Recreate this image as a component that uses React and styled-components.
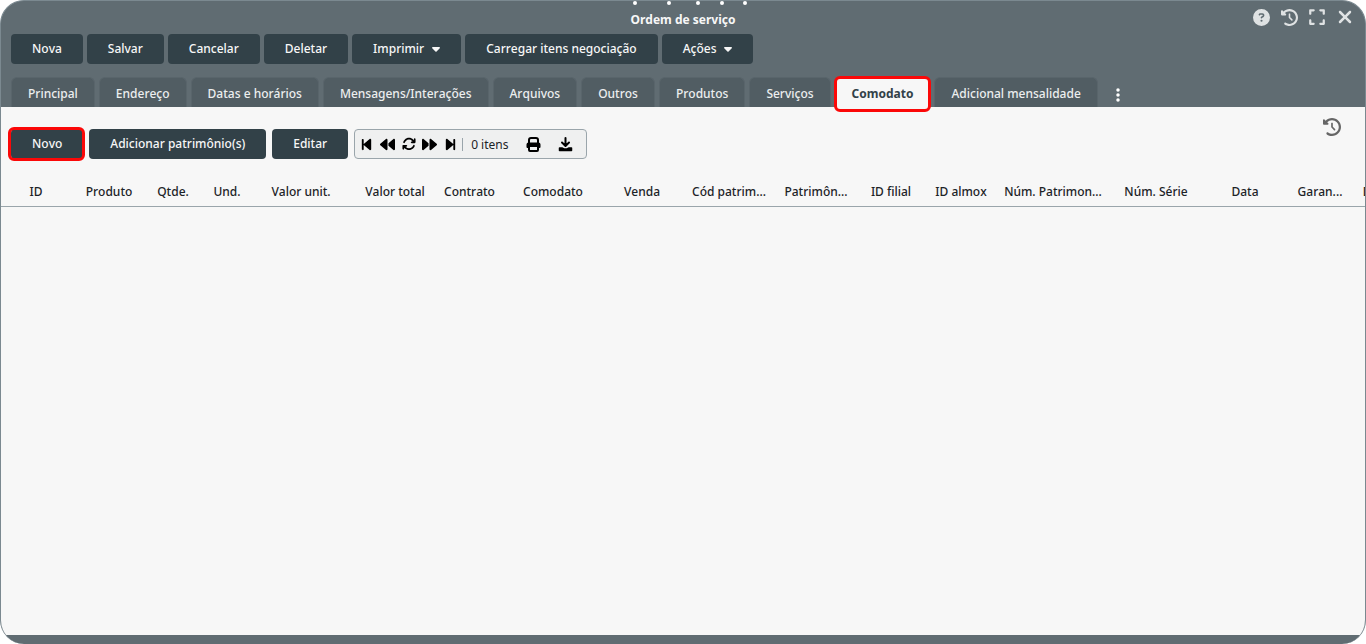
import React, { useState } from "react";
import styled, { createGlobalStyle } from "styled-components";
import {
  FaArrowsRotate,
  FaBackward,
  FaBackwardStep,
  FaCaretDown,
  FaCircleQuestion,
  FaClockRotateLeft,
  FaEllipsisVertical,
  FaExpand,
  FaForward,
  FaForwardStep,
  FaXmark,
} from "react-icons/fa6";

const actions = [
  { label: "Nova" },
  { label: "Salvar" },
  { label: "Cancelar" },
  { label: "Deletar" },
  { label: "Imprimir", menu: true },
  { label: "Carregar itens negociação" },
  { label: "Ações", menu: true },
];

const tabs = [
  "Principal",
  "Endereço",
  "Datas e horários",
  "Mensagens/Interações",
  "Arquivos",
  "Outros",
  "Produtos",
  "Serviços",
  "Comodato",
  "Adicional mensalidade",
];

const columns = [
  { label: "ID", width: 70 },
  { label: "Produto", width: 76 },
  { label: "Qtde.", width: 52 },
  { label: "Und.", width: 56 },
  { label: "Valor unit.", width: 92 },
  { label: "Valor total", width: 96 },
  { label: "Contrato", width: 53 },
  { label: "Comodato", width: 114 },
  { label: "Venda", width: 64 },
  { label: "Cód patrim...", width: 110 },
  { label: "Patrimôn...", width: 64 },
  { label: "ID filial", width: 86 },
  { label: "ID almox", width: 54 },
  { label: "Núm. Patrimon...", width: 130 },
  { label: "Núm. Série", width: 76 },
  { label: "Data", width: 102 },
  { label: "Garan...", width: 48 },
  { label: "Data garantia", width: 116 },
];

const dots = [17, 51, 80, 104, 127];

function PrintIcon() {
  return (
    <svg width="15" height="15" viewBox="0 0 15 15" fill="none" stroke="#000" strokeWidth="2" strokeLinejoin="round" aria-hidden="true">
      <path d="M3 6V3q0-2 2-2h5q2 0 2 2v3" />
      <path d="M2.5 5.5h10q2 0 2 2V10q0 1-1 1H12V9H3v2H1.5q-1 0-1-1V7.5q0-2 2-2z" fill="#000" stroke="none" />
      <path d="M3 9h9v4q0 1-1 1H4q-1 0-1-1z" />
    </svg>
  );
}

function DownloadIcon() {
  return (
    <svg width="15" height="15" viewBox="0 0 15 15" fill="none" stroke="#000" strokeLinecap="round" strokeLinejoin="round" aria-hidden="true">
      <path d="M7.5 1V8.5M4 5.5L7.5 9L11 5.5" strokeWidth="2" />
      <path d="M1.5 11H4l2 1h3l2-1h2.5v2.5h-12z" fill="#000" strokeWidth="1.5" />
    </svg>
  );
}

export default function App() {
  const [active, setActive] = useState("Comodato");

  return (
    <>
      <GlobalStyle />
      <Window>
        <header>
          <TitleBar>
            <Dots viewBox="0 0 130 6" aria-hidden="true">
              {dots.map((x) => (
                <circle key={x} cx={x} cy="2" r="2" />
              ))}
            </Dots>
            <Title>Ordem de serviço</Title>
            <WindowTools>
              <IconButton aria-label="Ajuda"><FaCircleQuestion size={17} /></IconButton>
              <IconButton aria-label="Histórico"><FaClockRotateLeft size={17} /></IconButton>
              <IconButton aria-label="Expandir"><FaExpand size={18} /></IconButton>
              <IconButton aria-label="Fechar"><FaXmark size={20} /></IconButton>
            </WindowTools>
          </TitleBar>

          <Actions>
            {actions.map((item) => (
              <Button key={item.label}>
                {item.label}
                {item.menu && <Caret />}
              </Button>
            ))}
          </Actions>

          <Tabs role="tablist">
            {tabs.map((tab) => (
              <Tab
                key={tab}
                role="tab"
                aria-selected={tab === active}
                $active={tab === active}
                onClick={() => setActive(tab)}
              >
                {tab}
              </Tab>
            ))}
            <MoreButton aria-label="Mais abas"><FaEllipsisVertical size={16} /></MoreButton>
          </Tabs>
        </header>

        <Body>
          <Toolbar>
            <Button $marked>Novo</Button>
            <Button>Adicionar patrimônio(s)</Button>
            <Button>Editar</Button>
            <Pager>
              <PagerButton aria-label="Primeira página"><FaBackwardStep size={15} /></PagerButton>
              <PagerButton aria-label="Página anterior"><FaBackward size={15} /></PagerButton>
              <PagerButton aria-label="Atualizar"><FaArrowsRotate size={14} /></PagerButton>
              <PagerButton aria-label="Próxima página"><FaForward size={15} /></PagerButton>
              <PagerButton aria-label="Última página"><FaForwardStep size={15} /></PagerButton>
              <Count>0 itens</Count>
              <PagerButton $wide aria-label="Imprimir lista"><PrintIcon /></PagerButton>
              <PagerButton $wide aria-label="Baixar lista"><DownloadIcon /></PagerButton>
            </Pager>
            <HistoryButton aria-label="Histórico de registros"><FaClockRotateLeft size={18} /></HistoryButton>
          </Toolbar>

          <TableWrap>
            <Table>
              <colgroup>
                {columns.map((col) => (
                  <Col key={col.label} $width={col.width} />
                ))}
              </colgroup>
              <thead>
                <tr>
                  {columns.map((col) => (
                    <Th key={col.label} scope="col">{col.label}</Th>
                  ))}
                </tr>
              </thead>
              <tbody />
            </Table>
          </TableWrap>
        </Body>
        <Footer />
      </Window>
    </>
  );
}

const GlobalStyle = createGlobalStyle`
  * {
    box-sizing: border-box;
  }
  body {
    margin: 0;
    background: #fff;
    font-family: "Noto Sans", sans-serif;
    font-size: 12px;
    font-kerning: none;
  }
  button {
    font: inherit;
    font-kerning: none;
    cursor: pointer;
  }
`;

const Window = styled.main`
  min-height: 100vh;
  display: flex;
  flex-direction: column;
  overflow: hidden;
  border: 1px solid #7b8990;
  border-bottom: none;
  border-radius: 24px;
  background: #606c72;
`;

const TitleBar = styled.div`
  height: 33px;
  display: grid;
  grid-template-columns: 1fr auto 1fr;
  grid-template-rows: 10px 18px;
  justify-items: center;
  padding: 0 6px;
`;

const Dots = styled.svg`
  grid-column: 2;
  width: 130px;
  height: 6px;
  fill: #fff;
`;

const Title = styled.h1`
  grid-column: 2;
  grid-row: 2;
  margin: 0;
  color: #f7f7f7;
  font-size: 12px;
  font-weight: 700;
  line-height: 18px;
`;

const WindowTools = styled.div`
  grid-column: 3;
  grid-row: 1 / 3;
  justify-self: end;
  display: flex;
  align-items: center;
  padding-top: 4px;
`;

const IconButton = styled.button`
  width: 28px;
  height: 28px;
  display: inline-flex;
  align-items: center;
  justify-content: center;
  padding: 0;
  border: none;
  background: none;
  color: #dfe2e3;
`;

const Actions = styled.div`
  display: flex;
  gap: 4px;
  padding: 0 10px;
`;

const Button = styled.button`
  position: relative;
  height: 30px;
  display: inline-flex;
  align-items: center;
  gap: 8px;
  padding: 0 21px 2px;
  border: none;
  border-radius: 4px;
  background: #324148;
  color: #f7f7f7;
  font-weight: 500;
  white-space: nowrap;

  &::after {
    content: "";
    display: ${(props) => (props.$marked ? "block" : "none")};
    position: absolute;
    inset: -2px -2px -2px -3px;
    border: 3px solid #fb0808;
    border-radius: 6px;
  }
`;

const Caret = styled(FaCaretDown)`
  width: 8px;
  height: 13px;
`;

const Tabs = styled.div`
  display: flex;
  gap: 4px;
  padding: 13px 10px 0;
`;

const Tab = styled.button`
  position: relative;
  height: 30px;
  padding: 2px 16px 0;
  border: 1px solid ${(props) => (props.$active ? "#f7f7f7" : "#59656b")};
  border-bottom: none;
  border-radius: 6px 6px 0 0;
  background: ${(props) => (props.$active ? "#f7f7f7" : "#515d63")};
  color: ${(props) => (props.$active ? "#324148" : "#eceeef")};
  font-weight: ${(props) => (props.$active ? 700 : 500)};
  white-space: nowrap;

  &::after {
    content: "";
    display: ${(props) => (props.$active ? "block" : "none")};
    position: absolute;
    inset: -2px -2px -5px;
    border: 3px solid #fb0808;
    border-radius: 6px;
  }
`;

const MoreButton = styled(IconButton)`
  align-self: flex-end;
  margin-left: 2px;
  padding-top: 4px;
  color: #fff;
`;

const Body = styled.section`
  flex: 1;
  background: #f7f7f7;
`;

const Toolbar = styled.div`
  display: flex;
  gap: 6px;
  padding: 22px 10px 0;
`;

const Pager = styled.div`
  height: 30px;
  display: flex;
  align-items: center;
  padding: 0 4px 0 1px;
  border: 1px solid #9aa5ab;
  border-radius: 4px;
  background: #eff0f0;
`;

const PagerButton = styled.button`
  width: ${(props) => (props.$wide ? "32px" : "21px")};
  height: 28px;
  display: inline-flex;
  align-items: center;
  justify-content: center;
  padding: 0;
  border: none;
  background: none;
  color: #000;
`;

const Count = styled.span`
  margin: 0 9px 0 1px;
  padding-left: 8px;
  border-left: 1px solid #9aa5ab;
  color: #1c2327;
  line-height: 13px;
`;

const HistoryButton = styled(IconButton)`
  margin: -16px 9px 0 auto;
  color: #666;
`;

const TableWrap = styled.div`
  overflow: hidden;
  padding-top: 18px;
`;

const Table = styled.table`
  width: 1459px;
  table-layout: fixed;
  border-collapse: collapse;
`;

const Col = styled.col`
  width: ${(props) => props.$width}px;
`;

const Th = styled.th`
  height: 29px;
  padding: 0;
  border-bottom: 1px solid #9aa5ab;
  color: #1c2327;
  font-weight: 500;
  text-align: center;
  white-space: nowrap;
`;

const Footer = styled.footer`
  height: 9px;
`;
